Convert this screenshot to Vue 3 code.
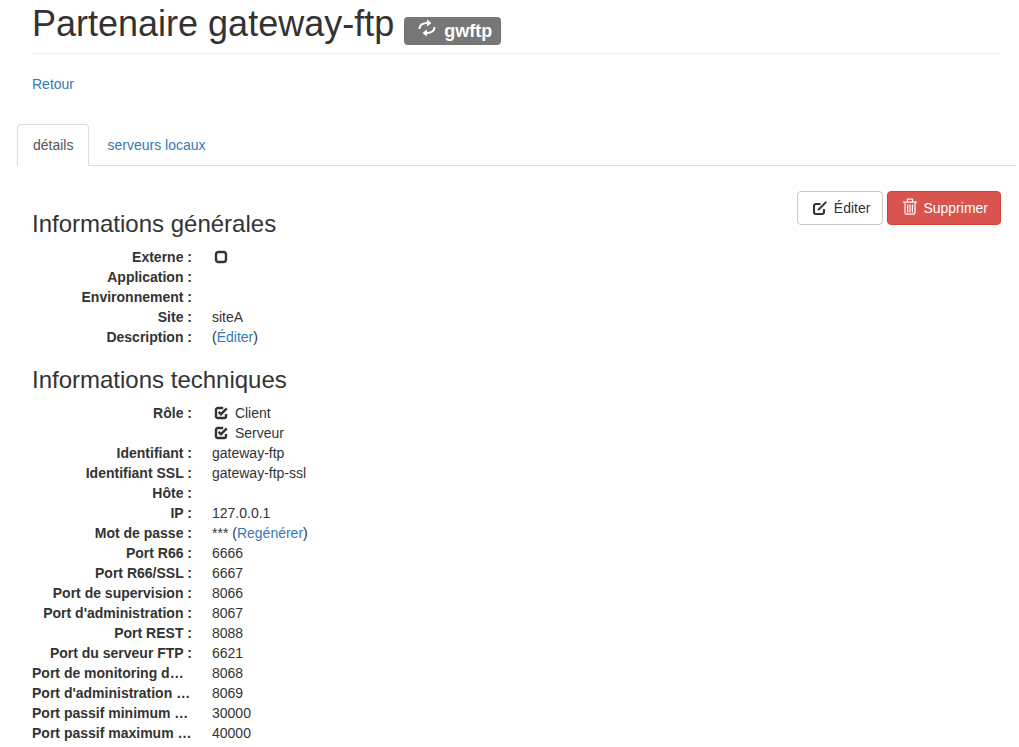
<template>
  <div class="page">
    <div class="header">
      <h1>
        Partenaire gateway-ftp
        <small class="label">
          <svg class="retweet" viewBox="0 0 18 18">
            <path class="line" d="M1.5 10C1.5 6 4 4 9.5 4" />
            <path d="M13.5 4 9 .5v7z" />
            <path class="line" d="M16.5 8c0 4-2.5 6-8 6" />
            <path d="M4.5 14 9 10.5v7z" />
          </svg>
          gwftp
        </small>
      </h1>
    </div>
    <p class="back"><a href="#">Retour</a></p>

    <ul class="tabs">
      <li class="active"><a href="#">détails</a></li>
      <li><a href="#">serveurs locaux</a></li>
    </ul>

    <div class="content">
      <div class="actions">
        <button class="btn">
          <svg class="ico edit" viewBox="0 0 16 16">
            <path class="stroke" d="M12 9v3a2 2 0 0 1-2 2H4a2 2 0 0 1-2-2V6a2 2 0 0 1 2-2h4.5" />
            <path class="fill" d="M13.6 1.2l1.4 1.4-7.4 7.4-2.2.8.8-2.2z" />
          </svg>
          Éditer
        </button>
        <button class="btn danger">
          <svg class="ico trash" viewBox="0 0 14 17">
            <path class="fill" d="M0 3.6h14v1.2H0zM3.8 3.6V1.6a1 1 0 0 1 1-1h4.4a1 1 0 0 1 1 1v2H9V1.8H5v1.8z" />
            <path class="stroke" d="M2 4.8v10a1.4 1.4 0 0 0 1.4 1.4h7.2a1.4 1.4 0 0 0 1.4-1.4v-10M4.6 6.6v8M7 6.6v8M9.4 6.6v8" />
          </svg>
          Supprimer
        </button>
      </div>

      <h3 class="first">Informations générales</h3>
      <dl>
        <template v-for="row in generales" :key="row.label">
          <dt>{{ row.label }} :</dt>
          <dd>
            <svg v-if="row.unchecked" class="box" viewBox="0 0 14 14">
              <rect x="2" y="2" width="10" height="10" rx="2.4" />
            </svg>
            <template v-if="row.link">(<a href="#">{{ row.link }}</a>)</template>
            {{ row.value }}
          </dd>
        </template>
      </dl>

      <h3>Informations techniques</h3>
      <dl>
        <dt>Rôle :</dt>
        <dd v-for="role in roles" :key="role" class="role">
          <svg class="box" viewBox="0 0 14 14">
            <path d="M12 8v2.2A1.8 1.8 0 0 1 10.2 12H3.8A1.8 1.8 0 0 1 2 10.2V3.8A1.8 1.8 0 0 1 3.8 2h5.4" />
            <path d="M4.6 5.8 7 8.2l5.8-5.8" />
          </svg>
          {{ role }}
        </dd>
        <template v-for="row in techniques" :key="row.label">
          <dt>{{ row.label }} :</dt>
          <dd>
            {{ row.value }}
            <template v-if="row.link">(<a href="#">{{ row.link }}</a>)</template>
          </dd>
        </template>
      </dl>
    </div>
  </div>
</template>

<script setup>
const generales = [
  { label: 'Externe', unchecked: true },
  { label: 'Application' },
  { label: 'Environnement' },
  { label: 'Site', value: 'siteA' },
  { label: 'Description', link: 'Éditer' },
]

const roles = ['Client', 'Serveur']

const techniques = [
  { label: 'Identifiant', value: 'gateway-ftp' },
  { label: 'Identifiant SSL', value: 'gateway-ftp-ssl' },
  { label: 'Hôte' },
  { label: 'IP', value: '127.0.0.1' },
  { label: 'Mot de passe', value: '***', link: 'Regénérer' },
  { label: 'Port R66', value: '6666' },
  { label: 'Port R66/SSL', value: '6667' },
  { label: 'Port de supervision', value: '8066' },
  { label: "Port d'administration", value: '8067' },
  { label: 'Port REST', value: '8088' },
  { label: 'Port du serveur FTP', value: '6621' },
  { label: 'Port de monitoring du serveur', value: '8068' },
  { label: "Port d'administration du serveur", value: '8069' },
  { label: 'Port passif minimum du serveur', value: '30000' },
  { label: 'Port passif maximum du serveur', value: '40000' },
]
</script>

<style>
html,
body {
  margin: 0;
  height: 747px;
  overflow: hidden;
  background: #fff;
}
</style>

<style scoped>
.page {
  width: 999px;
  margin-left: 17px;
  font-family: "Liberation Sans", Arial, sans-serif;
  font-size: 14px;
  line-height: 20px;
  color: #333;
}

a {
  color: #337ab7;
  text-decoration: none;
}

.header {
  margin: 0 15px;
  padding: 4px 0 9px;
  border-bottom: 1px solid #eee;
}

h1 {
  height: 40px;
  margin: 0;
  font-size: 36px;
  font-weight: 500;
  line-height: 40px;
}

.label {
  display: inline-block;
  padding: 0 9px 0 12px;
  height: 28px;
  border-radius: 4px;
  background: #777;
  color: #fff;
  font-size: 18px;
  font-weight: 700;
  line-height: 28px;
  vertical-align: -1px;
}

.retweet {
  width: 18px;
  height: 18px;
  margin: 0 3px 0 2px;
  vertical-align: 0;
  fill: #fff;
}

.retweet .line {
  fill: none;
  stroke: #fff;
  stroke-width: 2;
}

.back {
  margin: 20px 15px 30px;
}

.tabs {
  display: flex;
  margin: 0;
  padding: 0;
  list-style: none;
  border-bottom: 1px solid #ddd;
}

.tabs li {
  margin-bottom: -1px;
}

.tabs a {
  display: block;
  margin-right: 2px;
  padding: 10px 15px;
  border: 1px solid transparent;
  border-radius: 4px 4px 0 0;
}

.tabs .active a {
  color: #555;
  background: #fff;
  border-color: #ddd #ddd transparent;
}

.content {
  padding: 25px 15px 0;
}

.actions {
  display: flex;
  gap: 4px;
  float: right;
}

.btn {
  display: flex;
  align-items: center;
  gap: 6px;
  height: 34px;
  padding: 0 12px;
  border: 1px solid #ccc;
  border-radius: 4px;
  background: #fff;
  color: #333;
  font: inherit;
}

.btn.danger {
  background: #d9534f;
  border-color: #d43f3a;
  color: #fff;
}

.ico {
  width: 16px;
  height: 16px;
}

.ico .stroke {
  fill: none;
  stroke: currentColor;
  stroke-width: 1.2;
}

.ico .fill {
  fill: currentColor;
}

.edit {
  margin-left: 2px;
  margin-top: -1px;
}

.ico.edit .stroke {
  stroke-width: 2.1;
}

.trash {
  width: 14px;
  height: 17px;
  margin: -3px 0 0 3px;
}

h3 {
  margin: 20px 0 10px;
  font-size: 24px;
  font-weight: 500;
  line-height: 26px;
}

dl {
  display: grid;
  grid-template-columns: 160px 1fr;
  column-gap: 20px;
  margin: 0 0 20px;
}

dt {
  grid-column: 1;
  overflow: hidden;
  font-weight: 700;
  text-align: right;
  text-overflow: ellipsis;
  white-space: nowrap;
}

dd {
  grid-column: 2;
  margin: 0;
}

.box {
  width: 14px;
  height: 14px;
  margin: 0 3px 0 2px;
  vertical-align: -2px;
  fill: none;
  stroke: #333;
  stroke-width: 2.4;
}
</style>
